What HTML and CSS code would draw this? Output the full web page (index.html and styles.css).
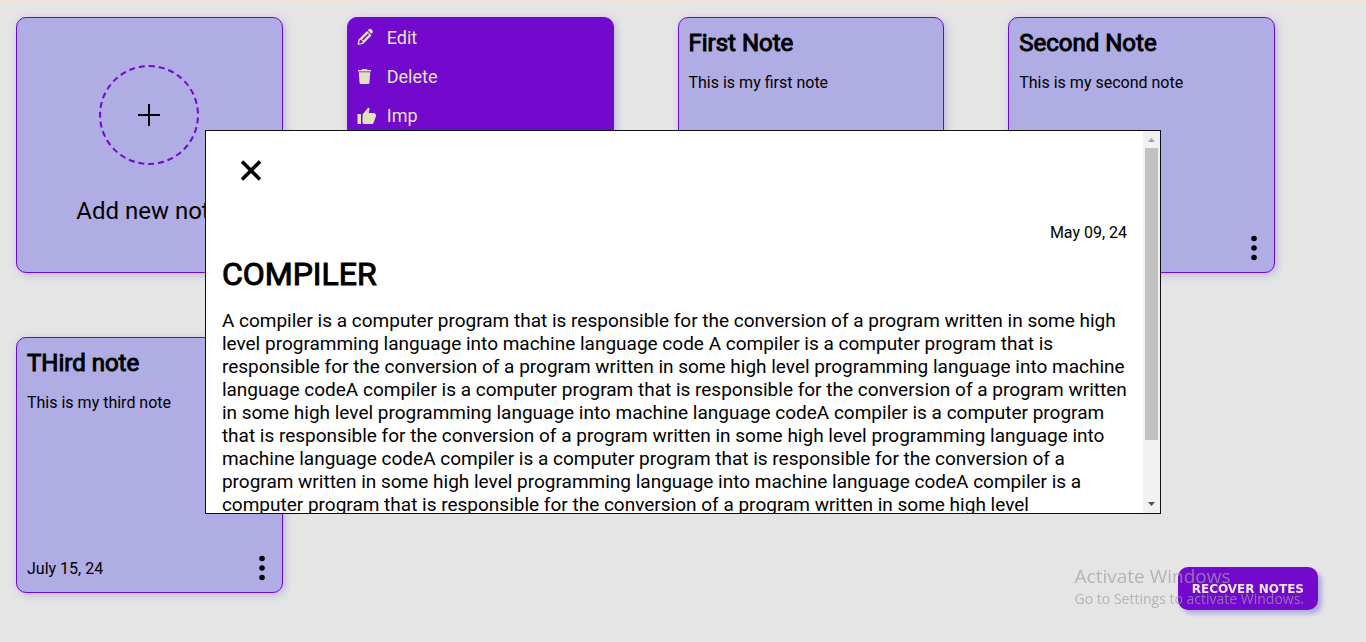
FILE: index.html
```html
<!DOCTYPE html>
<html lang="en">
<head>
<meta charset="utf-8">
<meta name="viewport" content="width=device-width, initial-scale=1">
<title>Notes</title>
<link rel="stylesheet" href="styles.css">
</head>
<body>
<main class="notes">
  <button type="button" class="card add-card">
    <span class="add-circle">
      <svg width="24" height="24" viewBox="0 0 24 24" aria-hidden="true"><path d="M12 1v22M1 12h22" stroke="#000" stroke-width="2"/></svg>
    </span>
    <span class="add-label">Add new note</span>
  </button>

  <article class="card menu-card">
    <button type="button" class="menu-item">
      <svg class="menu-icon" width="20" height="20" viewBox="0 0 20 20" aria-hidden="true"><path fill="currentColor" fill-rule="evenodd" d="M.5 17l1-5.500L10 3l4.500 4.500L6 16zM2.600 12.800l-.5 2.600 2.600-.5 1.200-1.200-2.100-2.100zM5 11.400l1.100 1.100L12 6.600l-1.100-1.100z"/><path fill="currentColor" d="M10.800 2.200l.9-.9q1.700-1.100 3.300.4 1.500 1.500.4 3.200l-1 1z"/></svg>
      <span>Edit</span>
    </button>
    <button type="button" class="menu-item">
      <svg class="menu-icon" width="20" height="20" viewBox="0 0 20 20" aria-hidden="true"><path fill="currentColor" d="M1 3h3.500l1-1h4l1 1H14v1.500H1zM1.800 5.300h11.400l-.7 10.200q-.2 1.500-1.500 1.500H4q-1.300 0-1.500-1.500z"/></svg>
      <span>Delete</span>
    </button>
    <button type="button" class="menu-item">
      <svg class="menu-icon" width="20" height="20" viewBox="0 0 20 20" aria-hidden="true"><path fill="currentColor" d="M.5 8H4v10H.5zM5.500 8.500L11 1.800q1.400-.3 1.600 1L11.700 7H17q1.900.3 1.900 2v1.500L16.500 17q-.5 1-1.600 1H7q-1.500-.1-1.500-1.600z"/></svg>
      <span>Imp</span>
    </button>
  </article>

  <article class="card">
    <h2 class="card-title">First Note</h2>
    <p class="card-text">This is my first note</p>
  </article>

  <article class="card">
    <h2 class="card-title">Second Note</h2>
    <p class="card-text">This is my second note</p>
    <footer class="card-footer">
      <button type="button" class="dots" aria-label="Note options">
        <svg width="6" height="26" viewBox="0 0 6 26" aria-hidden="true"><circle cx="3" cy="3.500" r="2.800"/><circle cx="3" cy="13" r="2.800"/><circle cx="3" cy="22.500" r="2.800"/></svg>
      </button>
    </footer>
  </article>

  <article class="card">
    <h2 class="card-title">THird note</h2>
    <p class="card-text">This is my third note</p>
    <footer class="card-footer">
      <time datetime="2024-07-15">July 15, 24</time>
      <button type="button" class="dots" aria-label="Note options">
        <svg width="6" height="26" viewBox="0 0 6 26" aria-hidden="true"><circle cx="3" cy="3.500" r="2.800"/><circle cx="3" cy="13" r="2.800"/><circle cx="3" cy="22.500" r="2.800"/></svg>
      </button>
    </footer>
  </article>
</main>

<button type="button" class="recover">RECOVER NOTES</button>

<section class="modal" role="dialog" aria-labelledby="modal-title">
  <div class="modal-body">
    <button type="button" class="close" aria-label="Close">
      <svg width="22" height="22" viewBox="0 0 22 22" aria-hidden="true"><path d="M2 1.500l18 18M20 1.500l-18 18" stroke="#000" stroke-width="3.600"/></svg>
    </button>
    <time class="modal-date" datetime="2024-05-09">May 09, 24</time>
    <h1 class="modal-title" id="modal-title">COMPILER</h1>
    <p class="modal-text">A compiler is a computer program that is responsible for the conversion of a program written in some high level programming language into machine language code A compiler is a computer program that is responsible for the conversion of a program written in some high level programming language into machine language codeA compiler is a computer program that is responsible for the conversion of a program written in some high level programming language into machine language codeA compiler is a computer program that is responsible for the conversion of a program written in some high level programming language into machine language codeA compiler is a computer program that is responsible for the conversion of a program written in some high level programming language into machine language codeA compiler is a computer program that is responsible for the conversion of a program written in some high level</p>
  </div>
  <div class="scrollbar" aria-hidden="true">
    <svg class="arrow arrow-up" width="7" height="4" viewBox="0 0 7 4"><path d="M0 4L3.500 0L7 4z"/></svg>
    <div class="track"><div class="thumb"></div></div>
    <svg class="arrow" width="7" height="4" viewBox="0 0 7 4"><path d="M0 0L3.500 4L7 0z"/></svg>
  </div>
</section>

<aside class="watermark">
  <p class="watermark-title">Activate Windows</p>
  <p class="watermark-text">Go to Settings to activate Windows.</p>
</aside>
</body>
</html>
```
FILE: styles.css
```css
* {
  box-sizing: border-box;
  margin: 0;
}

body {
  min-height: 100vh;
  border-top: 1px solid #f5dcd2;
  background: #e5e5e5;
  color: #000;
  font: 16px/19px Roboto, "Liberation Sans", sans-serif;
}

button {
  border: 0;
  padding: 0;
  background: none;
  color: inherit;
  font: inherit;
  cursor: pointer;
}

svg {
  display: block;
}

.notes {
  display: grid;
  grid-template-columns: repeat(4, 1fr);
  grid-auto-rows: 256px;
  gap: 64px;
  padding: 16px 91px 48px 16px;
}

.card {
  display: flex;
  flex-direction: column;
  padding: 11px 10px;
  border: 1px solid #7209cc;
  border-radius: 10px;
  background: #b0ace4;
  box-shadow: 2px 2px 8px #b8b4e4;
}

.add-card {
  align-items: center;
  justify-content: center;
  gap: 32px;
}

.add-circle {
  display: grid;
  place-items: center;
  width: 100px;
  height: 100px;
  border: 2px dashed #7209cc;
  border-radius: 50%;
}

.add-label {
  font-size: 24px;
  line-height: 29px;
}

.menu-card {
  gap: 18px;
  padding: 9px;
  background: #7209cc;
  color: #e2e2c2;
}

.menu-item {
  display: flex;
  align-items: center;
  gap: 10px;
  font-size: 18px;
  line-height: 21px;
}

.card-title {
  font-size: 24px;
  font-weight: 400;
  line-height: 28px;
  -webkit-text-stroke: 1px #000;
}

.card-text {
  margin-top: 16px;
}

.card-footer {
  display: flex;
  align-items: center;
  justify-content: space-between;
  margin-top: auto;
}

.dots {
  margin-left: auto;
  padding: 0 7px 0 8px;
}

.recover {
  position: fixed;
  right: 48px;
  bottom: 32px;
  padding: 14px 14px 12px;
  border-radius: 10px;
  background: #7209cc;
  box-shadow: 4px 4px 4px #b0ace4;
  color: #f0e6e6;
  font: bold 12px/17px "DejaVu Sans", sans-serif;
}

.modal {
  position: fixed;
  top: 130px;
  left: 15%;
  display: flex;
  width: 70%;
  height: 60vh;
  max-height: 384px;
  border: 1px solid #111;
  background: #fff;
}

.modal-body {
  display: flex;
  flex: 1;
  flex-direction: column;
  padding: 16px 4px 16px 16px;
  overflow-y: auto;
  scrollbar-width: none;
}

.close {
  align-self: flex-start;
  padding: 13px 18px;
}

.modal-date {
  align-self: flex-end;
  margin: 28px 12px 12px;
}

.modal-title {
  font-size: 32px;
  font-weight: 400;
  line-height: 40px;
  -webkit-text-stroke: 1px #000;
}

.modal-text {
  margin-top: 15px;
  font-size: 19px;
  line-height: 23px;
}

.scrollbar {
  display: flex;
  flex-direction: column;
  align-items: center;
  width: 17px;
  padding: 7px 2px;
  background: #f1f1f1;
}

.arrow {
  fill: #505050;
}

.arrow-up {
  fill: #a3a3a3;
}

.track {
  flex: 1;
  align-self: stretch;
  margin: 6px 0;
}

.thumb {
  width: 13px;
  height: 84%;
  background: #c1c1c1;
}

.watermark {
  position: fixed;
  right: 62px;
  bottom: 34px;
  color: rgba(160, 160, 160, 0.7);
  font-family: "Open Sans", "Noto Sans", sans-serif;
  pointer-events: none;
}

.watermark-title {
  font-size: 19px;
  line-height: 25px;
}

.watermark-text {
  font-size: 14px;
  line-height: 19px;
}
```
